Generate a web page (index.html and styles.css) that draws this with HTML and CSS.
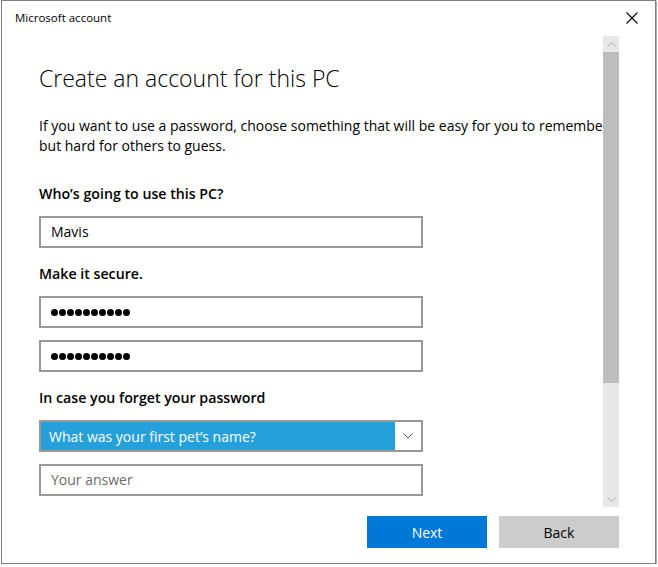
FILE: index.html
```html
<!DOCTYPE html>
<html lang="en">
<head>
<meta charset="utf-8">
<title>Microsoft account</title>
<link rel="stylesheet" href="styles.css">
</head>
<body>
<div class="window">
  <div class="titlebar">
    <span class="title-text">Microsoft account</span>
    <svg class="close" width="12" height="12" viewBox="0 0 12 12"><path d="M0.5 0.5 L11.5 11.5 M11.5 0.5 L0.5 11.5" stroke="#000" stroke-width="1.1" fill="none"/></svg>
  </div>
  <div class="main">
    <div class="scroll-area">
      <h1 class="heading">Create an account for this PC</h1>
      <p class="intro"><span class="line">If you want to use a password, choose something that will be easy for you to remember</span><span class="line">but hard for others to guess.</span></p>
      <div class="group first">
        <div class="label">Who’s going to use this PC?</div>
        <div class="field"><span class="value">Mavis</span></div>
      </div>
      <div class="group">
        <div class="label">Make it secure.</div>
        <div class="field"><span class="dots"><i></i><i></i><i></i><i></i><i></i><i></i><i></i><i></i><i></i><i></i></span></div>
        <div class="field spaced"><span class="dots"><i></i><i></i><i></i><i></i><i></i><i></i><i></i><i></i><i></i><i></i></span></div>
      </div>
      <div class="group">
        <div class="label">In case you forget your password</div>
        <div class="select">
          <span class="select-value">What was your first pet’s name?</span>
          <span class="select-arrow"><svg width="10" height="6" viewBox="0 0 10 6"><path d="M0.5 0.5 L5 5 L9.5 0.5" stroke="#555" stroke-width="1" fill="none"/></svg></span>
        </div>
        <div class="field spaced"><span class="placeholder">Your answer</span></div>
      </div>
    </div>
    <div class="scrollbar">
      <div class="sb-btn"><svg width="9" height="5" viewBox="0 0 9 5"><path d="M0.5 4.5 L4.5 0.5 L8.5 4.5" stroke="#a0a0a0" stroke-width="1" fill="none"/></svg></div>
      <div class="sb-thumb"></div>
      <div class="sb-track"></div>
      <div class="sb-btn"><svg width="9" height="5" viewBox="0 0 9 5"><path d="M0.5 0.5 L4.5 4.5 L8.5 0.5" stroke="#a0a0a0" stroke-width="1" fill="none"/></svg></div>
    </div>
  </div>
  <div class="footer">
    <button class="btn primary">Next</button>
    <button class="btn secondary">Back</button>
  </div>
</div>
</body>
</html>
```

FILE: styles.css
```css
html, body {
  margin: 0;
  padding: 0;
  background: #ffffff;
}
body {
  font-family: "Open Sans", "Noto Sans", sans-serif;
  color: #000;
}
.window {
  box-sizing: border-box;
  margin-left: 1px;
  width: 655px;
  height: 564px;
  border: 1px solid #808080;
  box-shadow: 1px 1px 0 #b0b0b0;
  background: #fff;
  display: flex;
  flex-direction: column;
}
.titlebar {
  height: 35px;
  flex: none;
  display: flex;
  align-items: center;
  justify-content: space-between;
  padding: 0 17px 0 13px;
}
.title-text {
  font-size: 11.5px;
  line-height: 16px;
  padding-bottom: 1px;
}
.close {
  display: block;
  margin-top: -1px;
}
.main {
  height: 471px;
  flex: none;
  display: flex;
  padding-right: 36px;
}
.scroll-area {
  width: 601px;
  flex: none;
  overflow: hidden;
  padding: 26px 0 0 37px;
  box-sizing: border-box;
}
.heading {
  margin: 0;
  font-size: 23px;
  font-weight: 300;
  line-height: 32px;
  white-space: nowrap;
}
.intro {
  margin: 22px 0 0;
  font-size: 14px;
  line-height: 20px;
  white-space: nowrap;
}
.line {
  display: block;
}
.group {
  margin-top: 16px;
}
.group.first {
  margin-top: 28px;
}
.label {
  font-size: 14.2px;
  font-weight: 600;
  line-height: 20px;
  margin-bottom: 12px;
}
.field, .select {
  box-sizing: border-box;
  width: 384px;
  height: 32px;
  border: 2px solid #999;
  display: flex;
  align-items: center;
  padding-left: 10px;
  font-size: 14px;
}
.field.spaced, .select + .field {
  margin-top: 12px;
}
.value {
  line-height: 20px;
  margin-top: -1px;
}
.placeholder {
  color: #6b6b6b;
  line-height: 20px;
}
.dots {
  display: flex;
  gap: 1px;
}
.dots i {
  width: 7px;
  height: 7px;
  border-radius: 50%;
  background: #000;
}
.select {
  padding-left: 0;
}
.select-value {
  flex: 1;
  align-self: stretch;
  background: #26a0da;
  color: #fff;
  display: flex;
  align-items: center;
  padding-left: 8px;
}
.select-arrow {
  width: 26px;
  display: flex;
  justify-content: center;
  align-items: center;
  background: #fff;
  align-self: stretch;
}
.select-arrow svg {
  display: block;
}
.scrollbar {
  width: 16px;
  flex: none;
  display: flex;
  flex-direction: column;
  background: #e8e8e8;
}
.sb-btn {
  height: 16px;
  flex: none;
  display: flex;
  align-items: center;
  justify-content: center;
}
.sb-btn svg {
  display: block;
}
.sb-thumb {
  height: 331px;
  flex: none;
  background: #bdbdbd;
}
.sb-track {
  flex: 1;
}
.footer {
  flex: 1;
  display: flex;
  justify-content: flex-end;
  gap: 12px;
  padding: 9px 36px 0 0;
  align-items: flex-start;
}
.btn {
  width: 120px;
  height: 32px;
  border: none;
  font-family: "Open Sans", "Noto Sans", sans-serif;
  font-size: 14px;
  padding: 0;
}
.btn.primary {
  background: #0078d7;
  color: #fff;
}
.btn.secondary {
  background: #cccccc;
  color: #000;
}
```
